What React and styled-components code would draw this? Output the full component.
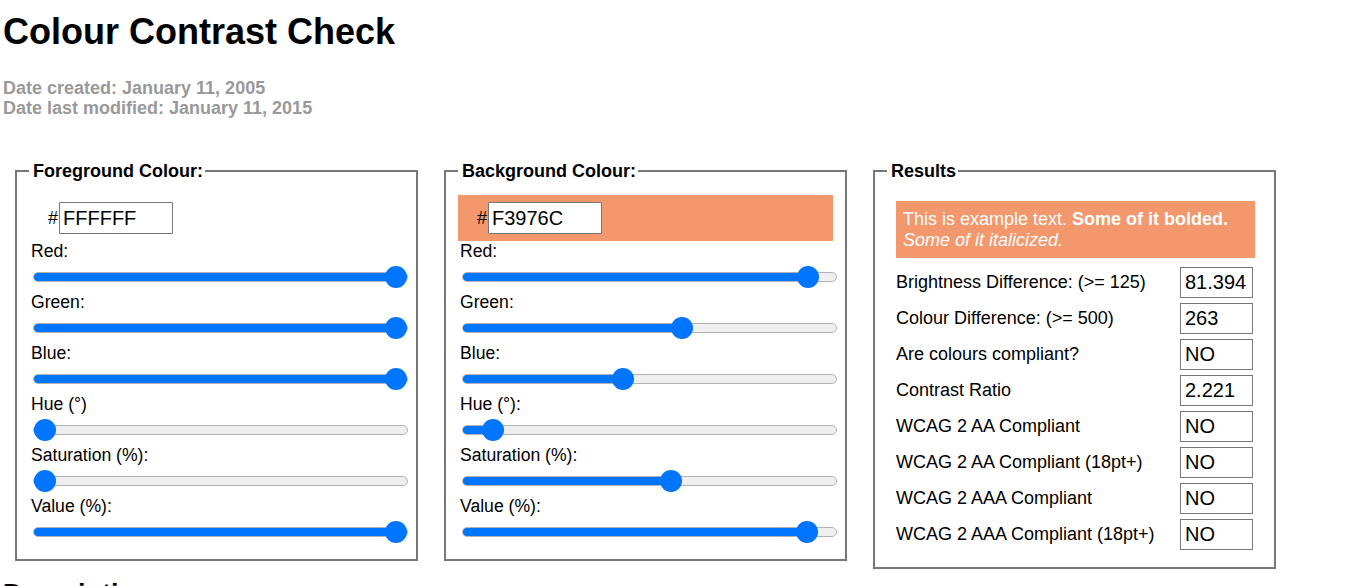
import React, { useState } from "react";
import styled, { createGlobalStyle } from "styled-components";

const GlobalStyle = createGlobalStyle`
  body {
    margin: 0;
    padding: 0 3px;
    font-family: "Liberation Sans", Arial, sans-serif;
    font-size: 18px;
    color: #000;
    background: #fff;
  }
`;

const Title = styled.h1`
  font-size: 36px;
  line-height: 40px;
  font-weight: bold;
  margin: 12px 0 26px;
`;

const Dates = styled.p`
  margin: 0;
  color: #999;
  font-weight: bold;
  font-size: 18px;
  line-height: 20px;
`;

const Panels = styled.div`
  display: flex;
  align-items: flex-start;
  gap: 26px;
  margin-top: 43px;
  padding-left: 12px;
`;

const Fieldset = styled.fieldset`
  box-sizing: border-box;
  width: 403px;
  min-width: 0;
  margin: 0;
  padding: 0 12px ${(p) => p.$bottom || 12}px;
  border: 2px solid #777;
`;

const Legend = styled.legend`
  font-size: 18px;
  line-height: 20px;
  font-weight: bold;
  padding: 0 2px 0 4px;
`;

const HexBlock = styled.div`
  display: flex;
  align-items: center;
  box-sizing: border-box;
  height: 46px;
  margin-top: 14px;
  padding: 0 0 0 19px;
  background: ${(p) => p.$colour};
`;

const Hash = styled.span`
  font-size: 18px;
  margin-right: 1px;
`;

const HexInput = styled.input`
  box-sizing: border-box;
  width: 114px;
  height: 32px;
  padding: 0 3px;
  border: 1px solid #767676;
  border-radius: 1px;
  font-family: inherit;
  font-size: 20px;
  color: #000;
  background: #fff;
  outline: none;
`;

const Label = styled.label`
  display: block;
  padding-left: 2px;
  font-size: 17.6px;
  line-height: 20px;
`;

const Range = styled.input`
  -webkit-appearance: none;
  appearance: none;
  display: block;
  box-sizing: border-box;
  width: 100%;
  height: 10px;
  margin: 11px 0 10px 4px;
  border: 1px solid #b2b2b2;
  border-radius: 5px;
  outline: none;
  cursor: pointer;

  &::-webkit-slider-thumb {
    -webkit-appearance: none;
    width: 22px;
    height: 22px;
    border: none;
    border-radius: 50%;
    background: #0075ff;
  }
`;

const Example = styled.div`
  margin: 20px 7px 0 9px;
  padding: 8px 7px 7px;
  font-size: 18px;
  line-height: 21px;
  background: ${(p) => p.$bg};
  color: ${(p) => p.$fg};
`;

const Rows = styled.div`
  display: flex;
  flex-direction: column;
  gap: 5px;
  margin: 9px 9px 0 9px;
`;

const Row = styled.div`
  display: flex;
  align-items: center;
  justify-content: space-between;
  height: 31px;
  font-size: 18px;
`;

const Output = styled.input`
  box-sizing: border-box;
  width: 73px;
  height: 31px;
  padding: 0 4px;
  border: 1px solid #767676;
  font-family: inherit;
  font-size: 20px;
  color: #000;
  background: #fff;
  outline: none;
`;

const SubHeading = styled.h2`
  font-size: 27px;
  font-weight: bold;
  margin: 10px 0 0;
`;

const isHex = (t) => /^[0-9a-f]{6}$/i.test(t);
const hexToRgb = (h) => [0, 2, 4].map((i) => parseInt(h.slice(i, i + 2), 16));
const rgbToHex = (rgb) =>
  rgb.map((v) => Math.round(v).toString(16).padStart(2, "0")).join("").toUpperCase();

const rgbToHsv = ([r, g, b]) => {
  const max = Math.max(r, g, b);
  const min = Math.min(r, g, b);
  const d = max - min;
  let h = 0;
  if (d) {
    if (max === r) h = 60 * (((g - b) / d) % 6);
    else if (max === g) h = 60 * ((b - r) / d + 2);
    else h = 60 * ((r - g) / d + 4);
  }
  if (h < 0) h += 360;
  return [h, max ? (d / max) * 100 : 0, (max / 255) * 100];
};

const hsvToRgb = (h, s, v) => {
  s /= 100;
  v /= 100;
  const c = v * s;
  const x = c * (1 - Math.abs(((h / 60) % 2) - 1));
  const m = v - c;
  const [r, g, b] =
    h < 60 ? [c, x, 0] : h < 120 ? [x, c, 0] : h < 180 ? [0, c, x] :
    h < 240 ? [0, x, c] : h < 300 ? [x, 0, c] : [c, 0, x];
  return [r, g, b].map((n) => Math.round((n + m) * 255));
};

const luminance = (rgb) => {
  const [r, g, b] = rgb.map((v) => {
    const c = v / 255;
    return c <= 0.03928 ? c / 12.92 : Math.pow((c + 0.055) / 1.055, 2.4);
  });
  return 0.2126 * r + 0.7152 * g + 0.0722 * b;
};

const brightness = ([r, g, b]) => (299 * r + 587 * g + 114 * b) / 1000;
const trim = (n) => String(parseFloat(n.toFixed(3)));

const Slider = ({ label, max, value, onChange }) => {
  const pct = value / max;
  return (
    <>
      <Label>{label}</Label>
      <Range
        type="range"
        min={0}
        max={max}
        value={value}
        onChange={(e) => onChange(Number(e.target.value))}
        style={{
          background: `linear-gradient(to right, #0075ff calc(11px + ${pct} * (100% - 22px)), #efefef 0)`,
        }}
      />
    </>
  );
};

const ColourPanel = ({ title, colour, setColour, hueLabel }) => {
  const { text, rgb } = colour;
  const [h, s, v] = rgbToHsv(rgb);

  const setRgb = (next) => setColour({ text: rgbToHex(next), rgb: next });
  const setChannel = (i) => (val) => setRgb(rgb.map((c, j) => (j === i ? val : c)));

  return (
    <Fieldset>
      <Legend>{title}</Legend>
      <HexBlock $colour={"#" + rgbToHex(rgb)}>
        <Hash>#</Hash>
        <HexInput
          value={text}
          maxLength={6}
          onChange={(e) => {
            const t = e.target.value;
            setColour({ text: t, rgb: isHex(t) ? hexToRgb(t) : rgb });
          }}
        />
      </HexBlock>
      <Slider label="Red:" max={255} value={rgb[0]} onChange={setChannel(0)} />
      <Slider label="Green:" max={255} value={rgb[1]} onChange={setChannel(1)} />
      <Slider label="Blue:" max={255} value={rgb[2]} onChange={setChannel(2)} />
      <Slider label={hueLabel} max={360} value={Math.round(h)} onChange={(x) => setRgb(hsvToRgb(x % 360, s, v))} />
      <Slider label="Saturation (%):" max={100} value={Math.round(s)} onChange={(x) => setRgb(hsvToRgb(h, x, v))} />
      <Slider label="Value (%):" max={100} value={Math.round(v)} onChange={(x) => setRgb(hsvToRgb(h, s, x))} />
    </Fieldset>
  );
};

const App = () => {
  const [fg, setFg] = useState({ text: "FFFFFF", rgb: [255, 255, 255] });
  const [bg, setBg] = useState({ text: "F3976C", rgb: [243, 151, 108] });

  const bright = Math.abs(brightness(fg.rgb) - brightness(bg.rgb));
  const diff = fg.rgb.reduce((sum, c, i) => sum + Math.abs(c - bg.rgb[i]), 0);
  const l1 = luminance(fg.rgb);
  const l2 = luminance(bg.rgb);
  const ratio = (Math.max(l1, l2) + 0.05) / (Math.min(l1, l2) + 0.05);
  const yesNo = (ok) => (ok ? "YES" : "NO");

  const results = [
    ["Brightness Difference: (>= 125)", trim(bright)],
    ["Colour Difference: (>= 500)", String(diff)],
    ["Are colours compliant?", yesNo(bright >= 125 && diff >= 500)],
    ["Contrast Ratio", trim(ratio)],
    ["WCAG 2 AA Compliant", yesNo(ratio >= 4.5)],
    ["WCAG 2 AA Compliant (18pt+)", yesNo(ratio >= 3)],
    ["WCAG 2 AAA Compliant", yesNo(ratio >= 7)],
    ["WCAG 2 AAA Compliant (18pt+)", yesNo(ratio >= 4.5)],
  ];

  return (
    <>
      <GlobalStyle />
      <Title>Colour Contrast Check</Title>
      <Dates>
        Date created: January 11, 2005
        <br />
        Date last modified: January 11, 2015
      </Dates>
      <Panels>
        <ColourPanel title="Foreground Colour:" colour={fg} setColour={setFg} hueLabel="Hue (°)" />
        <ColourPanel title="Background Colour:" colour={bg} setColour={setBg} hueLabel="Hue (°):" />
        <Fieldset $bottom={17}>
          <Legend>Results</Legend>
          <Example $bg={"#" + rgbToHex(bg.rgb)} $fg={"#" + rgbToHex(fg.rgb)}>
            This is example text. <b>Some of it bolded.</b> <i>Some of it italicized.</i>
          </Example>
          <Rows>
            {results.map(([name, val]) => (
              <Row key={name}>
                <span>{name}</span>
                <Output readOnly value={val} />
              </Row>
            ))}
          </Rows>
        </Fieldset>
      </Panels>
      <SubHeading>Description</SubHeading>
    </>
  );
};

export default App;
